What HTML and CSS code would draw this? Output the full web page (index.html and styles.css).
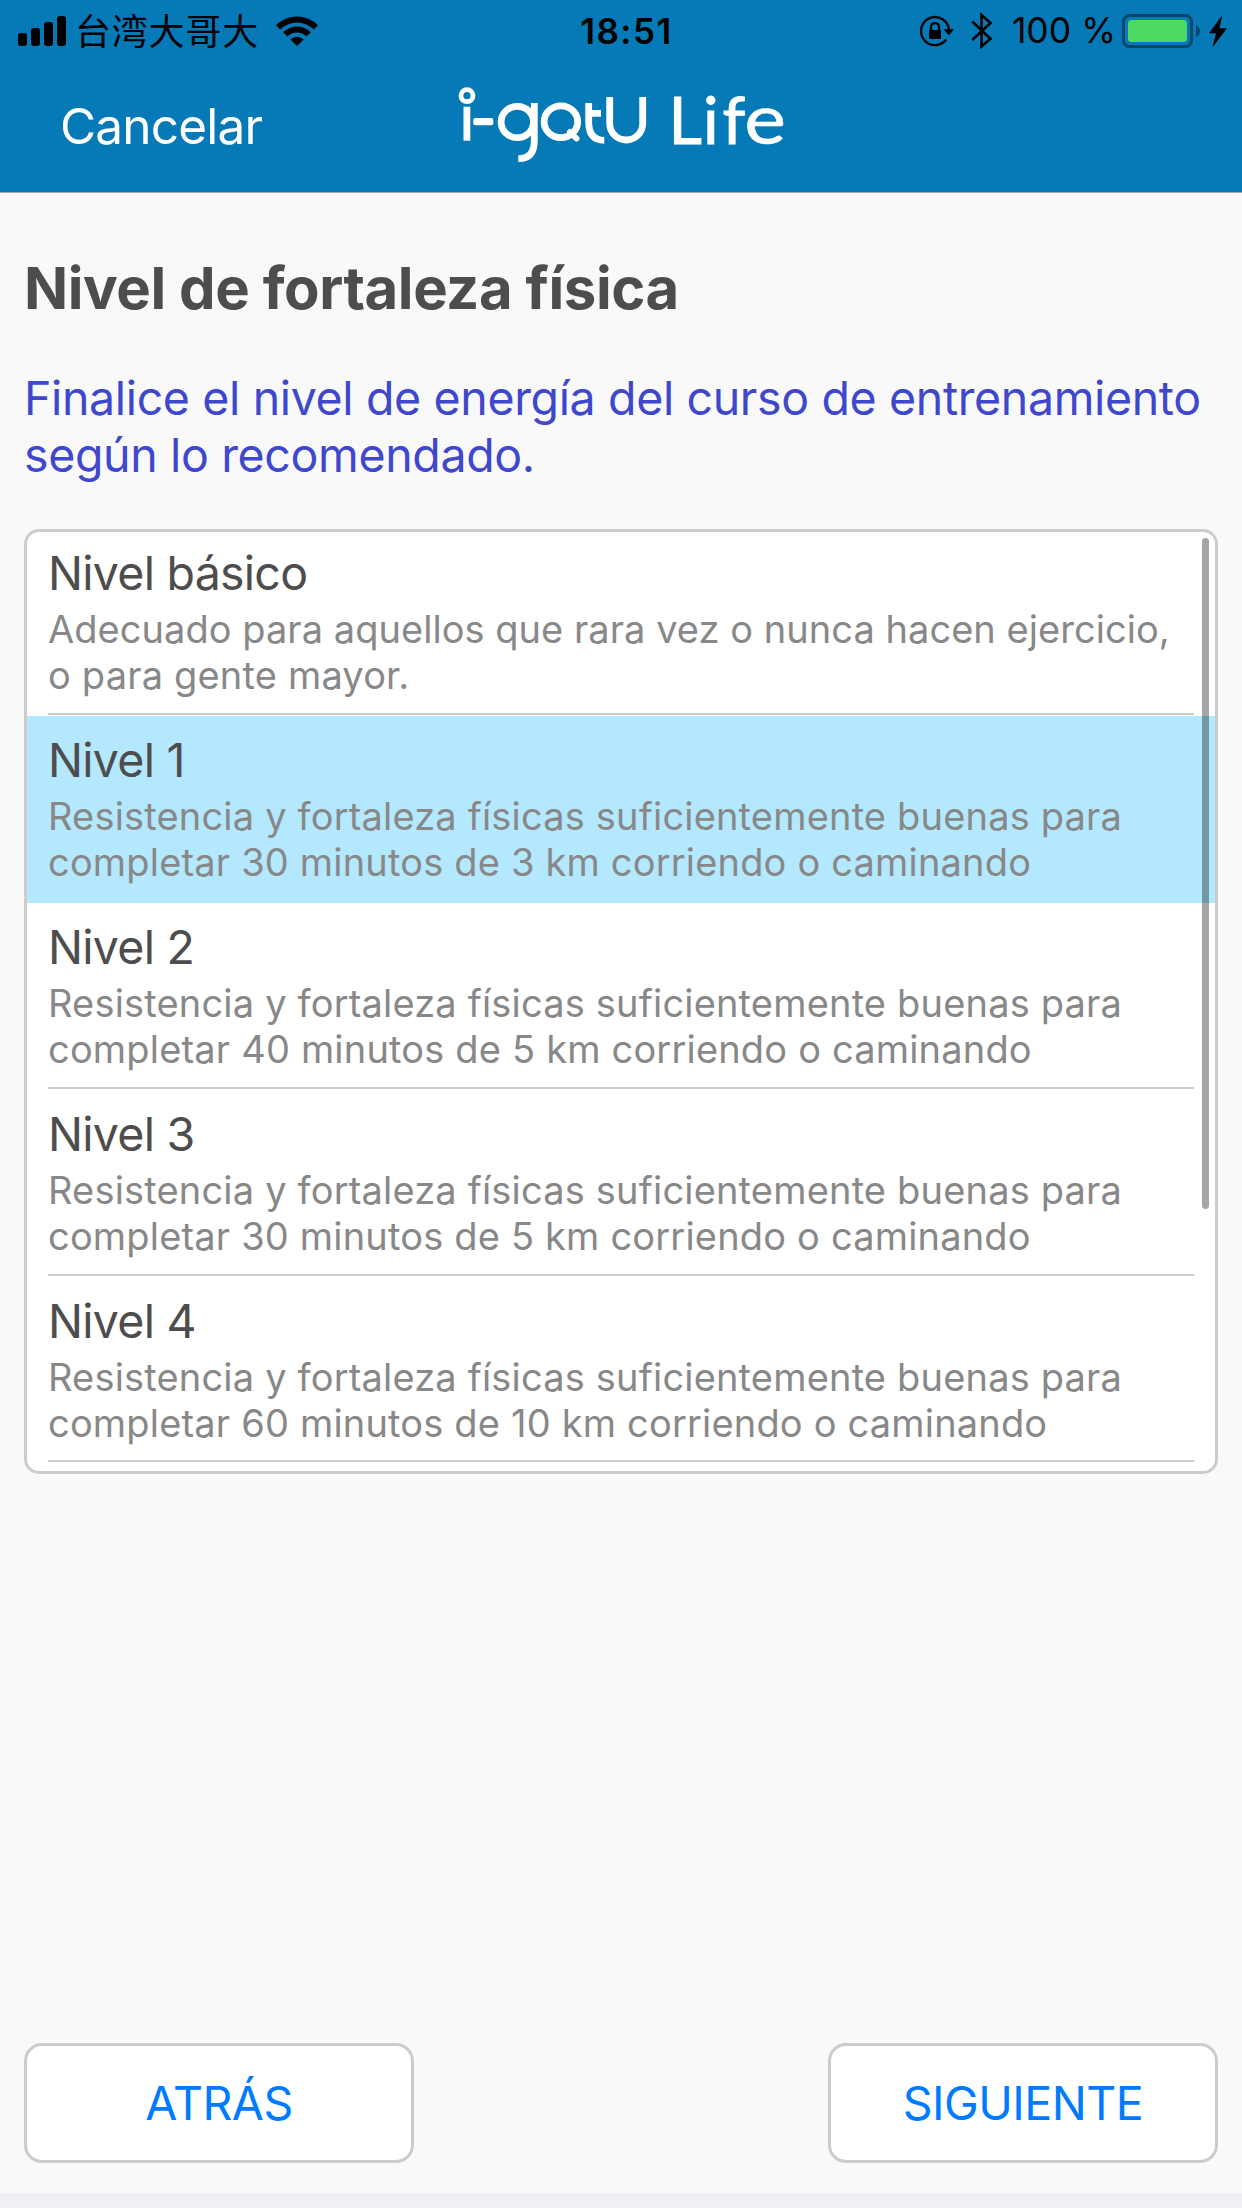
FILE: index.html
```html
<!DOCTYPE html>
<html lang="es">
<head>
<meta charset="utf-8">
<title>i-gotU Life</title>
<link rel="stylesheet" href="styles.css">
</head>
<body>
<div class="screen">
  <header class="header">
    <div class="status">
      <div class="status-left">
        <svg class="signal" width="48" height="30" viewBox="0 0 48 30"><rect y="17" width="9" height="13" rx="3"/><rect x="13" y="12" width="9" height="18" rx="3"/><rect x="26" y="6" width="9" height="24" rx="3"/><rect x="39" width="9" height="30" rx="3"/></svg>
        <span class="carrier">台湾大哥大</span>
        <svg class="wifi" width="42" height="30" viewBox="0 0 42 30"><path d="M0 9.3a29.6 29.6 0 0 1 42 0L37.8 13.6a23.7 23.7 0 0 0-33.6 0z"/><path d="M7.2 16.3a19.5 19.5 0 0 1 27.6 0l-4.3 4.2a13.5 13.5 0 0 0-19 0z"/><path d="M14.3 23.5a9.5 9.5 0 0 1 13.4 0L21 30z"/></svg>
      </div>
      <time class="clock">18:51</time>
      <div class="status-right">
        <svg class="lock" width="36" height="32" viewBox="0 0 36 32"><path class="line" d="M29 15.5A14 14 0 1 0 26.2 24.5"/><path d="M23.5 14.3h10.5L28.8 20.3z"/><rect x="9" y="15" width="12" height="9" rx="1.3"/><path class="line" d="M11 16v-4a4 4 0 0 1 8 0v4"/></svg>
        <svg class="bluetooth" width="22" height="38" viewBox="0 0 22 38"><path d="M1.2 9.5L19.5 26.8L10.5 34.5V3L19.5 11L1.2 28"/></svg>
        <span class="percent">100 %</span>
        <svg class="battery" width="80" height="34" viewBox="0 0 80 34"><rect class="shell" x="1.5" y="1.5" width="68" height="31" rx="6"/><rect class="charge" x="6" y="6" width="59" height="22" rx="3.5"/><path class="nub" d="M74 11c5.300 2 5.300 10 0 12z"/></svg>
        <svg class="bolt" width="18" height="33" viewBox="0 0 18 33"><path d="M13.300 0L0 18.300h7L3.300 32.500L18 13.300h-7.500z"/></svg>
      </div>
    </div>
    <nav class="navbar">
      <a class="cancel">Cancelar</a>
      <svg class="logo" width="340" height="80" viewBox="457 86 340 80" role="img" aria-label="i-gotU Life">
        <g class="mark">
          <circle class="dot" cx="467" cy="95.700" r="6"/>
          <path d="M466.900 106.700V140.700"/>
          <rect class="dash" x="473.300" y="118" width="20" height="7.300" rx="2"/>
          <ellipse cx="517.300" cy="122" rx="16.200" ry="15.700"/>
          <path d="M534.300 103V141Q534.300 158.700 518.300 158.700"/>
          <ellipse cx="560.900" cy="121.700" rx="16.800" ry="15.900"/>
          <path class="tail" d="M570 132L576.500 138.500"/>
          <path d="M588.700 103V122Q588.700 140.300 604.300 140.300M588 113.300H601"/>
          <path d="M609.700 97V123.500A16.500 16.500 0 0 0 642.700 123.500V97"/>
        </g>
        <text class="wordmark" y="143.600" x="668.500 703 722.500">Lif</text>
        <text class="wordmark wide" transform="translate(744.200 143.600) scale(1.130 1)">e</text>
      </svg>
    </nav>
  </header>
  <main class="content">
    <h1 class="title">Nivel de fortaleza física</h1>
    <p class="intro">Finalice el nivel de energía del curso de entrenamiento<br>según lo recomendado.</p>
    <div class="panel">
      <ul class="levels">
        <li class="level"><h2>Nivel básico</h2><p><span class="snug">Adecuado para aquellos que rara vez o nunca hacen ejercicio,</span><br>o para gente mayor.</p></li>
        <li class="level selected"><h2>Nivel 1</h2><p>Resistencia y fortaleza físicas suficientemente buenas para<br>completar 30 minutos de 3 km corriendo o caminando</p></li>
        <li class="level"><h2>Nivel 2</h2><p>Resistencia y fortaleza físicas suficientemente buenas para<br>completar 40 minutos de 5 km corriendo o caminando</p></li>
        <li class="level"><h2>Nivel 3</h2><p>Resistencia y fortaleza físicas suficientemente buenas para<br>completar 30 minutos de 5 km corriendo o caminando</p></li>
        <li class="level"><h2>Nivel 4</h2><p>Resistencia y fortaleza físicas suficientemente buenas para<br>completar 60 minutos de 10 km corriendo o caminando</p></li>
      </ul>
      <div class="scrollbar"></div>
    </div>
    <div class="actions">
      <button class="btn" type="button">ATRÁS</button>
      <button class="btn" type="button">SIGUIENTE</button>
    </div>
  </main>
</div>
</body>
</html>
```
FILE: styles.css
```css
* { box-sizing: border-box; margin: 0; padding: 0; }
body { background: #efeff4; font-family: Inter, "Liberation Sans", sans-serif; }
svg { display: block; flex: none; }
.screen { width: 1242px; height: 2208px; display: flex; flex-direction: column; padding-bottom: 15px; overflow: hidden; }

.header { height: 193px; flex: none; background: #067ab7; border-bottom: 1px solid #a9a9ad; }
.status { height: 60px; display: grid; grid-template-columns: 1fr auto 1fr; align-items: center; padding: 0 15px 0 18px; }
.status-left, .status-right { display: flex; align-items: center; }
.status-right { justify-content: flex-end; }
.carrier { font: 400 36px/56px "Noto Sans CJK SC", sans-serif; letter-spacing: 0.800px; margin: 0 0 4px 9px; white-space: nowrap; }
.wifi { margin-left: 17px; }
.clock { font-size: 35px; line-height: 62px; font-weight: 600; letter-spacing: 1.5px; margin: 0 -4px 0 4px; }
.lock { margin-right: 15px; }
.lock .line { fill: none; stroke: #000; stroke-width: 2.3; }
.bluetooth { margin-right: 19px; }
.bluetooth path { fill: none; stroke: #000; stroke-width: 2.6; }
.percent { font-size: 35.500px; line-height: 62px; letter-spacing: 0; white-space: nowrap; margin-right: 6px; }
.battery .shell { fill: none; stroke: #05476c; stroke-width: 3; }
.battery .charge { fill: #4cd964; }
.battery .nub { fill: #05476c; }
.bolt { margin-left: 7px; }

.navbar { display: flex; align-items: flex-start; padding-left: 60px; }
.cancel { width: 397px; color: #fff; font-size: 49.500px; line-height: 60px; padding-top: 36px; letter-spacing: -0.8px; }
.logo { margin-top: 26px; overflow: visible; }
.mark { fill: none; stroke: #fff; stroke-width: 6.800; }
.mark .dot { stroke-width: 4.800; }
.mark .dash { fill: #fff; stroke: none; }
.mark .tail { stroke-linecap: round; stroke-width: 6; }
.wordmark { font-family: Lato, sans-serif; font-size: 65px; fill: #fff; stroke: #fff; stroke-width: 1; }
.wordmark.wide { font-size: 70px; stroke-width: 0.5; }

.content { flex: 1; display: flex; flex-direction: column; background: #f9f9f9; padding: 60px 24px 30px; }
.title { color: #4d4d4d; font-size: 58px; line-height: 70px; font-weight: 700; letter-spacing: -0.430px; white-space: nowrap; }
.intro { color: #3f48cc; font-size: 46.500px; line-height: 57px; margin-top: 47px; white-space: nowrap; letter-spacing: -0.360px; }
.panel { position: relative; height: 945px; margin-top: 45px; background: #fff; border: 3px solid #ccc; border-radius: 15px; overflow: hidden; }
.levels { list-style: none; margin-top: -3px; }
.level { height: 187px; padding: 16px 21px 0; display: flex; flex-direction: column; position: relative; }
.level::after { content: ""; position: absolute; left: 21px; right: 21px; bottom: 1px; height: 2px; background: #ccc; }
.level:last-child::after { bottom: 2px; }
.level.selected { background: #b3e8ff; }
.level.selected::after { display: none; }
.level h2 { color: #4d4d4d; font-size: 46.500px; line-height: 56px; font-weight: 400; letter-spacing: -0.750px; }
.level p { color: #888; font-size: 38px; line-height: 46px; margin-top: 5px; white-space: nowrap; letter-spacing: 0.180px; }
.level .snug { letter-spacing: 0.040px; }
.scrollbar { position: absolute; top: 6px; right: 6px; width: 7px; height: 671px; border-radius: 4px; background: rgba(0, 0, 0, 0.35); }
.actions { display: flex; justify-content: space-between; margin-top: auto; }
.btn { width: 390px; height: 120px; border: 3px solid #ccc; border-radius: 18px; background: #fff; color: #007aff; font-family: inherit; font-size: 46.500px; letter-spacing: -0.5px; }
```
